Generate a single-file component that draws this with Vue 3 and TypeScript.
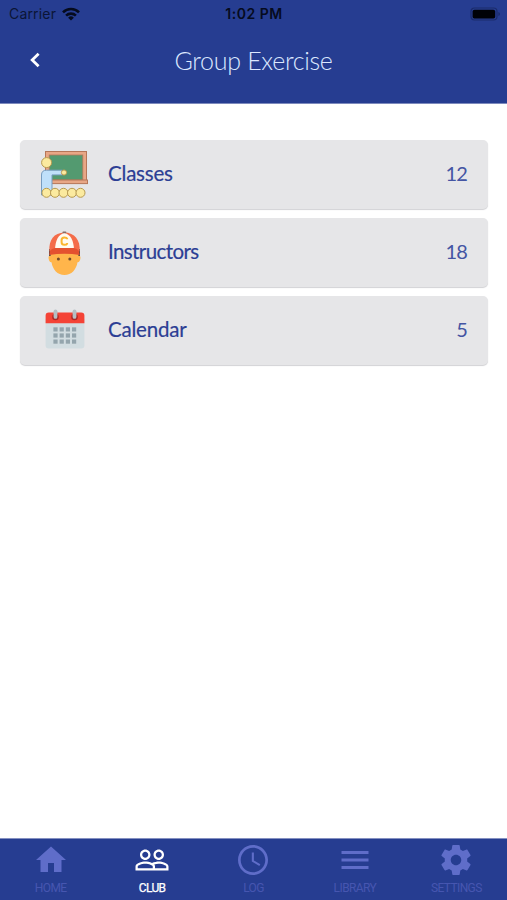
<script setup lang="ts">
type IconName = 'classes' | 'instructors' | 'calendar'

interface MenuItem {
  icon: IconName
  label: string
  count: number
}

interface Tab {
  label: string
  path: string
  active?: boolean
}

const items: MenuItem[] = [
  { icon: 'classes', label: 'Classes', count: 12 },
  { icon: 'instructors', label: 'Instructors', count: 18 },
  { icon: 'calendar', label: 'Calendar', count: 5 },
]

const seats: number[] = [6.5, 15, 23.5, 32, 40.5]
const columns: number[] = [8, 14.2, 20.4, 26.6]
const lines: number[] = [18.3, 24.4, 30.5]

const tabs: Tab[] = [
  { label: 'HOME', path: 'M10 20v-6h4v6h5v-8h3L12 3 2 12h3v8z' },
  {
    label: 'CLUB',
    active: true,
    path: 'M16.5 13c-1.2 0-3.07.34-4.5 1-1.43-.67-3.3-1-4.5-1C5.33 13 1 14.08 1 16.25V19h22v-2.75c0-2.17-4.33-3.25-6.5-3.25zm-4 4.5h-10v-1.25c0-.54 2.56-1.75 5-1.75s5 1.21 5 1.75v1.25zm9 0H14v-1.25c0-.46-.2-.86-.52-1.22.88-.3 1.96-.53 3.02-.53 2.44 0 5 1.21 5 1.75v1.25zM7.5 12c1.93 0 3.5-1.57 3.5-3.5S9.43 5 7.5 5 4 6.57 4 8.5 5.57 12 7.5 12zm0-5.5c1.1 0 2 .9 2 2s-.9 2-2 2-2-.9-2-2 .9-2 2-2zm9 5.5c1.93 0 3.5-1.57 3.5-3.5S18.43 5 16.5 5 13 6.57 13 8.5s1.57 3.5 3.5 3.5zm0-5.5c1.1 0 2 .9 2 2s-.9 2-2 2-2-.9-2-2 .9-2 2-2z',
  },
  {
    label: 'LOG',
    path: 'M11.99 2C6.47 2 2 6.48 2 12s4.47 10 9.99 10C17.52 22 22 17.52 22 12S17.52 2 11.99 2zM12 20.2c-4.53 0-8.2-3.67-8.2-8.2S7.47 3.8 12 3.8s8.2 3.67 8.2 8.2-3.67 8.2-8.2 8.2zM12.6 7h-1.4v6l5 3 .7-1.1-4.3-2.6z',
  },
  { label: 'LIBRARY', path: 'M3 18h18v-2H3v2zm0-5h18v-2H3v2zm0-7v2h18V6H3z' },
  {
    label: 'SETTINGS',
    path: 'M19.43 12.98c.04-.32.07-.64.07-.98s-.03-.66-.07-.98l2.11-1.65c.19-.15.24-.42.12-.64l-2-3.46c-.12-.22-.39-.3-.61-.22l-2.49 1c-.52-.4-1.08-.73-1.69-.98l-.38-2.65C14.46 2.18 14.25 2 14 2h-4c-.25 0-.46.18-.49.42l-.38 2.65c-.61.25-1.17.59-1.69.98l-2.49-1c-.23-.09-.49 0-.61.22l-2 3.46c-.13.22-.07.49.12.64l2.11 1.65c-.04.32-.07.65-.07.98s.03.66.07.98l-2.11 1.65c-.19.15-.24.42-.12.64l2 3.46c.12.22.39.3.61.22l2.49-1c.52.4 1.08.73 1.69.98l.38 2.65c.03.24.24.42.49.42h4c.25 0 .46-.18.49-.42l.38-2.65c.61-.25 1.17-.59 1.69-.98l2.49 1c.23.09.49 0 .61-.22l2-3.46c.12-.22.07-.49-.12-.64l-2.11-1.65zM12 15.5c-1.93 0-3.5-1.57-3.5-3.5s1.57-3.5 3.5-3.5 3.5 1.57 3.5 3.5-1.57 3.5-3.5 3.5z',
  },
]
</script>

<template>
  <div class="screen">
    <header class="header">
      <div class="status">
        <div class="carrier">
          <span>Carrier</span>
          <svg class="wifi" viewBox="0 0 18 14">
            <g fill="none" stroke="#050b1e" stroke-width="2.6">
              <path d="M1 5.3a11.3 11.3 0 0 1 16 0" />
              <path d="M4.1 8.6a7 7 0 0 1 9.8 0" />
            </g>
            <path d="M9 13.6 6.1 10.7a4.1 4.1 0 0 1 5.8 0z" fill="#050b1e" />
          </svg>
        </div>
        <span class="time">1:02 PM</span>
        <div class="power">
          <svg class="battery" viewBox="0 0 31 14">
            <rect x="1" y="1" width="26" height="12" rx="3.5" fill="none" stroke="#1b2c6c" stroke-width="1.2" />
            <rect x="2.6" y="2.7" width="22.6" height="8.8" rx="1.8" fill="#000207" />
            <path d="M28.4 5v4q1.6-.6 1.6-2t-1.6-2z" fill="#1b2c6c" />
          </svg>
        </div>
      </div>
      <div class="titlebar">
        <button class="back" type="button" aria-label="Back">
          <svg viewBox="0 0 12 16">
            <path d="M9.6 1.8 3.2 8l6.4 6.2" fill="none" stroke="#fff" stroke-width="2.8" />
          </svg>
        </button>
        <h1 class="title">Group Exercise</h1>
      </div>
    </header>

    <main class="list">
      <div v-for="item in items" :key="item.label" class="card">
        <div class="picture">
          <svg v-if="item.icon === 'classes'" width="49" height="49" viewBox="0 0 49 49">
            <rect x="5.5" y="1.5" width="41" height="31" fill="#e8a786" stroke="#b67759" stroke-width="1" />
            <rect x="9.2" y="5" width="33.6" height="25" fill="#539a70" stroke="#b17a5b" stroke-width=".8" />
            <rect x="5.5" y="30" width="42" height="3.6" fill="#e8a786" stroke="#b67759" stroke-width="1" />
            <path d="M1.5 45V25q0-4.8 5-4.8h16v4.7H12V45z" fill="#bfe0fa" stroke="#779dc0" stroke-width="1" />
            <circle cx="6.6" cy="12.6" r="5" fill="#fbea9f" stroke="#b79a50" stroke-width="1" />
            <circle cx="24" cy="22.5" r="2.6" fill="#fbea9f" stroke="#b79a50" stroke-width="1" />
            <circle v-for="x in seats" :key="x" :cx="x" cy="42.8" r="4.5" fill="#fbea9f" stroke="#b79a50" stroke-width="1" />
          </svg>
          <svg v-else-if="item.icon === 'instructors'" class="face" width="33" height="45" viewBox="0 0 33 45">
            <path d="M1 18h31v9H1z" fill="#42454b" />
            <path d="M2.7 25C.8 24.2.2 26 .7 28c.4 2 1.3 3.5 2.8 3.2C4.7 38.5 9.5 44 16.5 44s11.8-5.5 13-12.8c1.5.3 2.4-1.2 2.8-3.2.5-2-.1-3.8-2-3V20H2.7z" fill="#ffb54b" />
            <circle cx="10.4" cy="28" r="1.5" fill="#70492a" />
            <circle cx="21.8" cy="28" r="1.5" fill="#70492a" />
            <path d="M1.4 20.5C.5 9 6 1.8 16.3 1.6 26.7 1.7 32.5 9 31.6 20.5z" fill="#f46c49" />
            <path d="M7 19C7.2 9.8 10.2 3.6 16.4 1.8 22.7 3.6 25.8 9.8 26 19z" fill="#fffaf0" />
            <path d="M1.2 24q0-6.5 6-7h18.5q6 .5 6 7-15.2-2.5-30.5 0z" fill="#e4512f" />
            <rect x="14.4" y=".5" width="4" height="1.8" rx=".9" fill="#876c65" />
            <path d="M19.1 8.2v-.6q-.4-1.2-2.7-1.2-2.8 0-2.8 2.5v2.4q0 2.5 2.8 2.5 2.3 0 2.7-1.2V12" fill="none" stroke="#fbb62f" stroke-width="2" />
          </svg>
          <svg v-else class="month" width="40" height="41" viewBox="0 0 40 41">
            <path d="M.6 10h38.8v26.5q0 3-3 3H3.6q-3 0-3-3z" fill="#d2dde1" />
            <path d="M.6 14.2V6.8q0-3.2 3.2-3.2h32.4q3.2 0 3.2 3.2v7.4z" fill="#f44336" />
            <g fill="#a92b27">
              <circle cx="10.5" cy="8" r="3.3" />
              <circle cx="29.5" cy="8" r="3.3" />
            </g>
            <g fill="#b5c0c5">
              <rect x="8.6" y=".4" width="3.8" height="9.4" rx="1.9" />
              <rect x="27.6" y=".4" width="3.8" height="9.4" rx="1.9" />
            </g>
            <g fill="#94a5ad">
              <template v-for="y in lines" :key="y">
                <rect v-for="x in columns" :key="x" :x="x + 0.4" :y="y" width="4.2" height="4.2" />
              </template>
            </g>
          </svg>
        </div>
        <span class="label" :class="item.icon">{{ item.label }}</span>
        <span class="count">{{ item.count }}</span>
      </div>
    </main>

    <nav class="tabs">
      <div v-for="tab in tabs" :key="tab.label" class="tab" :class="{ active: tab.active }">
        <svg class="glyph" viewBox="0 0 24 24"><path :d="tab.path" fill="currentColor" /></svg>
        <span class="caption">{{ tab.label }}</span>
      </div>
    </nav>
  </div>
</template>

<style>
body {
  margin: 0;
  background: #fff;
}
</style>

<style scoped>
.screen {
  display: flex;
  flex-direction: column;
  width: 507px;
  height: 900px;
  overflow: hidden;
  background: #fff;
}

.header {
  flex: none;
  box-sizing: border-box;
  height: 104px;
  background: #263d91;
  border-bottom: 1px solid #7d8abd;
}

.status {
  display: grid;
  grid-template-columns: 1fr auto 1fr;
  align-items: center;
  height: 27px;
  padding: 0 6px 0 9px;
  font-family: Inter, sans-serif;
  font-size: 14px;
  color: #0b1536;
}

.carrier {
  display: flex;
  align-items: center;
  gap: 6px;
  letter-spacing: 0.18px;
}

.wifi {
  width: 18px;
  height: 14px;
}

.time {
  font-weight: 600;
  font-size: 14px;
  letter-spacing: 0.5px;
  margin-right: 2px;
  color: #050b1e;
}

.power {
  display: flex;
  justify-content: flex-end;
}

.battery {
  width: 31px;
  height: 14px;
}

.titlebar {
  display: grid;
  grid-template-columns: 60px 1fr 60px;
  align-items: center;
  height: 66px;
}

.back {
  display: flex;
  padding: 0 0 1px 29px;
  border: 0;
  background: none;
}

.back svg {
  width: 12px;
  height: 16px;
}

.title {
  margin: 0;
  text-align: center;
  font-family: Lato, sans-serif;
  font-size: 25px;
  font-weight: 300;
  line-height: 30px;
  letter-spacing: -0.3px;
  color: #dce8ff;
}

.list {
  flex: 1;
  display: flex;
  flex-direction: column;
  gap: 9px;
  padding: 36px 19px 0 20px;
}

.card {
  display: flex;
  align-items: center;
  box-sizing: border-box;
  height: 69px;
  padding-right: 21px;
  border-radius: 5px;
  background: #e6e6e8;
  box-shadow: 0 1px 1px #d2d2d5;
}

.picture {
  display: flex;
  justify-content: center;
  width: 88px;
}

.face {
  margin-top: 1px;
}

.month {
  margin: 0 0 2px 1px;
}

.label {
  flex: 1;
  padding-bottom: 3px;
  font-family: Lato, sans-serif;
  font-size: 20.5px;
  line-height: 26px;
  letter-spacing: -0.2px;
  color: #2c3e94;
  -webkit-text-stroke: 0.2px #2c3e94;
}

.label.instructors {
  letter-spacing: -0.6px;
}

.count {
  padding-bottom: 3px;
  font-family: Lato, sans-serif;
  font-size: 20px;
  line-height: 26px;
  letter-spacing: -0.8px;
  color: #4455a3;
}

.tabs {
  flex: none;
  display: grid;
  grid-template-columns: repeat(5, 1fr);
  box-sizing: border-box;
  height: 62px;
  border-top: 1px solid #8490c1;
  background: #263d91;
}

.tab {
  display: flex;
  flex-direction: column;
  align-items: center;
  padding-top: 3px;
  color: #5f6dc9;
}

.glyph {
  width: 36px;
  height: 36px;
}

.caption {
  margin-top: 4px;
  font-family: Roboto, sans-serif;
  font-size: 12px;
  line-height: 13px;
  letter-spacing: -0.6px;
  color: #4656b0;
}

.active,
.active .caption {
  color: #fff;
}

.active .caption {
  -webkit-text-stroke: 0.25px #fff;
}
</style>
